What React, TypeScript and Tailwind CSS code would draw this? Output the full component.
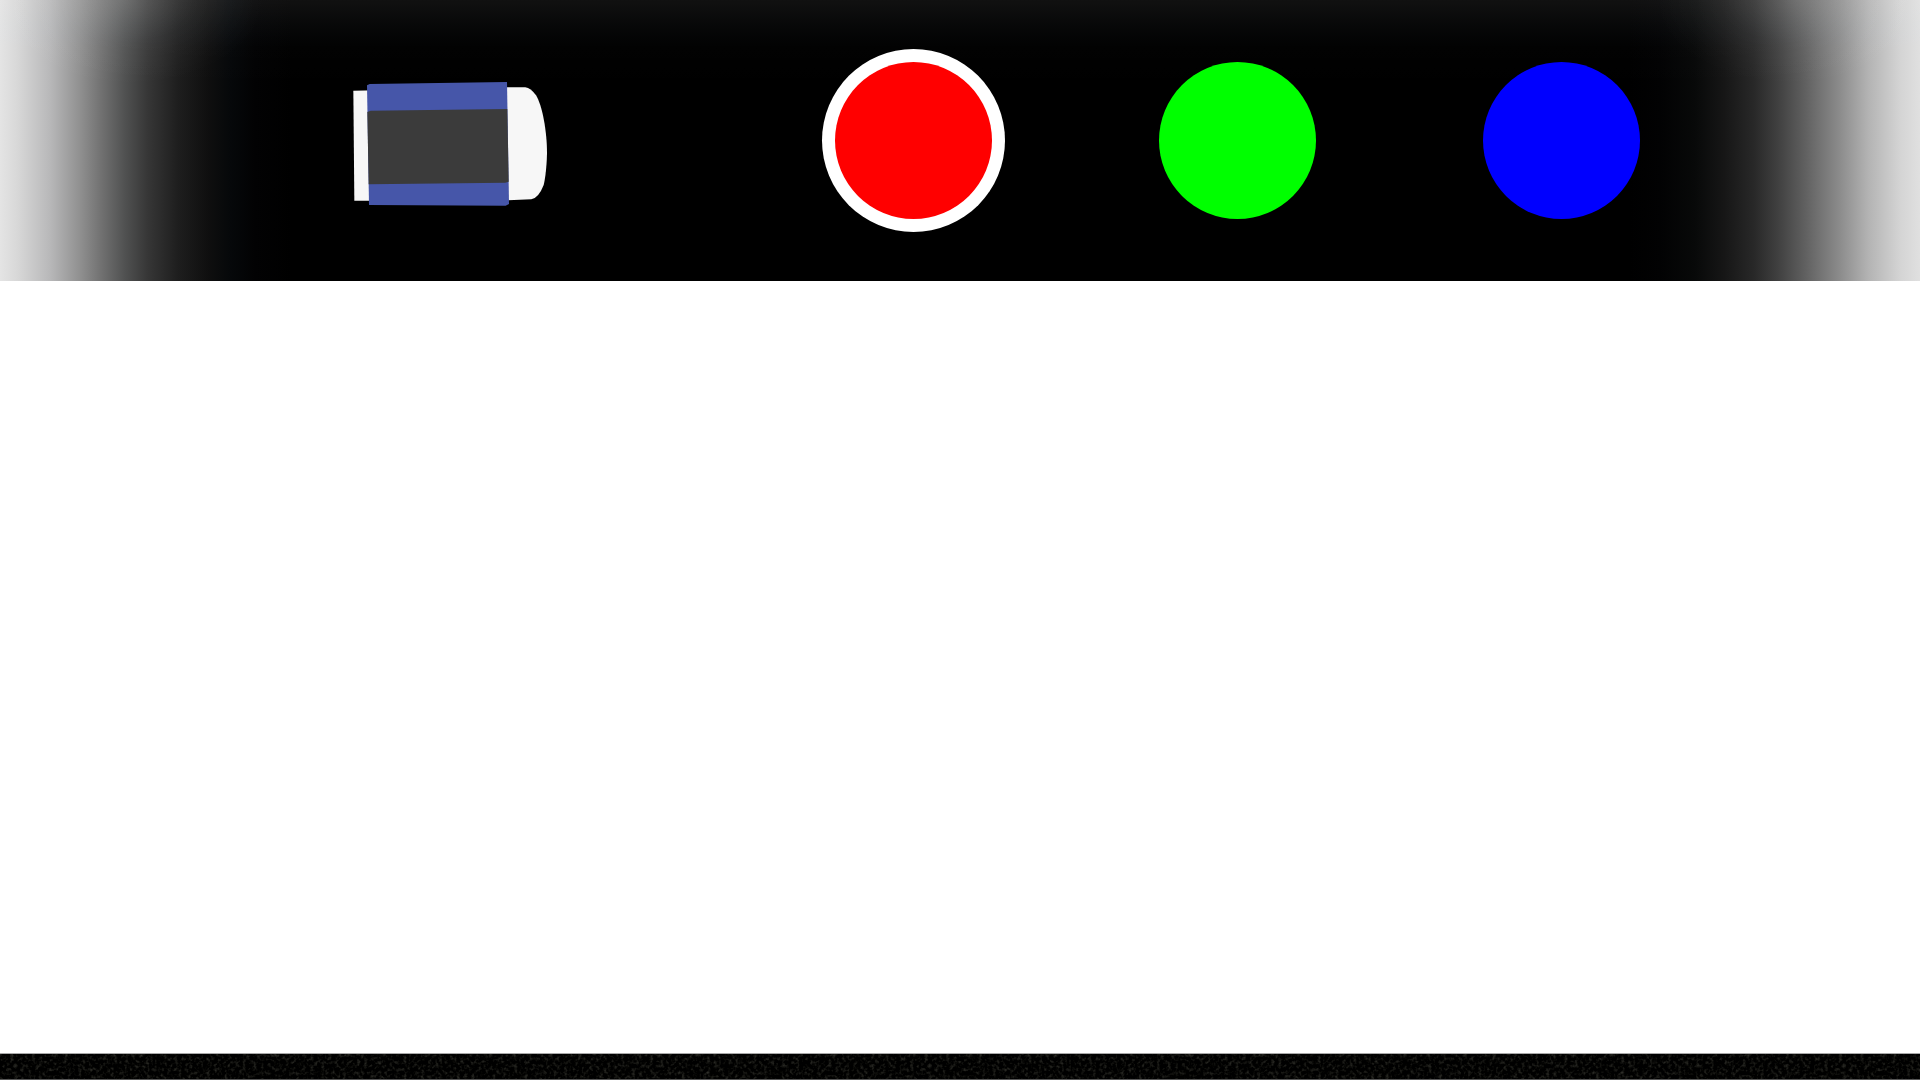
import { useState } from "react";

const swatches = [
  { name: "Red", fill: "bg-[#ff0000]" },
  { name: "Green", fill: "bg-[#00ff00]" },
  { name: "Blue", fill: "bg-[#0000ff]" },
];

function EraserIcon() {
  return (
    <svg viewBox="39 15 585 393" className="h-[131px] w-[195px]" aria-hidden="true">
      <path d="M40 62 L110 61 L110 392 L43 392 Z" fill="#f7f7f7" />
      <path
        d="M495 52 L556 52 Q572 54 588 76 C606 105 621 180 621 250 C620 290 616 325 611 345 Q596 384 574 388 L495 391 Z"
        fill="#f7f7f7"
      />
      <path d="M81 46 L89 42 L501 36 L507 402 L497 407 L87 405 Z" fill="#4656a9" />
      <path d="M82 126 L92 122 L502 117 L506 335 L496 338 L86 343 Z" fill="#3b3b3b" />
    </svg>
  );
}

export default function App() {
  const [tool, setTool] = useState("Red");

  return (
    <div className="flex min-h-screen flex-col bg-white">
      <header className="flex h-[281px] items-center justify-between bg-black bg-[radial-gradient(ellipse_140px_85px_at_125px_0px,rgba(255,255,255,0.12),rgba(255,255,255,0.035)_50%,transparent),radial-gradient(ellipse_140px_85px_at_calc(100%-125px)_0px,rgba(255,255,255,0.1),rgba(255,255,255,0.03)_50%,transparent),linear-gradient(to_bottom,rgba(255,255,255,0.068),rgba(220,240,255,0.036)_24px,rgba(200,220,255,0.018)_38px,rgba(255,255,255,0.008)_48px,transparent_88px),linear-gradient(to_right,#e4e4e4,#d8d8d8_17px,#b8b8b9_50px,#909090_80px,#707070_102px,#505151_125px,#363636_148px,#1e1e1e_178px,#0f0f0f_208px,#06080a_230px,#020203_255px,#000000_292px,#000000_calc(100%-290px),#020203_calc(100%-260px),#080909_calc(100%-225px),#161616_calc(100%-196px),#282828_calc(100%-166px),#404040_calc(100%-142px),#606060_calc(100%-115px),#8c8c8c_calc(100%-80px),#b4b4b4_calc(100%-51px),#d4d4d4_calc(100%-20px),#e0e0e0)] pr-[280px] pl-[353px]">
        <button type="button" aria-label="Eraser" onClick={() => setTool("Eraser")}>
          <EraserIcon />
        </button>
        <div role="radiogroup" aria-label="Brush color" className="flex w-[805px] justify-between">
          {swatches.map(({ name, fill }) => (
            <input
              key={name}
              type="radio"
              name="brush"
              aria-label={name}
              checked={tool === name}
              onChange={() => setTool(name)}
              className={`size-[157px] appearance-none rounded-full ring-white checked:ring-[13px] ${fill}`}
            />
          ))}
        </div>
      </header>

      <main aria-label="Canvas" className="flex-1 bg-white" />

      <footer className="h-[27px] border-y border-t-[#a8a8a8] border-b-[#565656] bg-black">
        <svg className="block size-full" aria-hidden="true">
          <filter id="grain" x="0" y="0" width="100%" height="100%" colorInterpolationFilters="sRGB">
            <feTurbulence type="fractalNoise" baseFrequency="0.28" numOctaves="2" seed="4" />
            <feColorMatrix values="0.42 0 0 0 -0.2  0.42 0 0 0 -0.2  0.38 0 0 0 -0.185  0 0 0 0 1" />
          </filter>
          <rect width="100%" height="100%" filter="url(#grain)" />
        </svg>
      </footer>
    </div>
  );
}
